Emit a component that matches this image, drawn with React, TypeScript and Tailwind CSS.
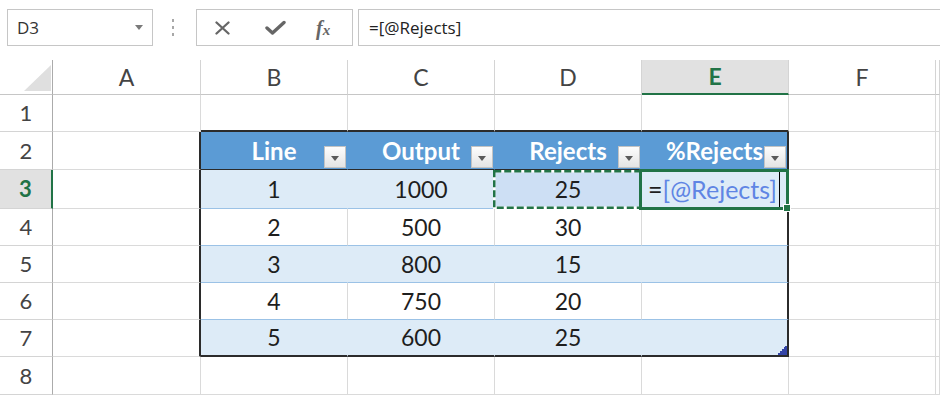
import React from 'react';

// Excel-style table view: name box, formula bar, sheet grid with a formatted table

const columns = ['A', 'B', 'C', 'D', 'E', 'F', ''];
const headers = ['Line', 'Output', 'Rejects', '%Rejects'];
const data = [
  ['1', '1000', '25'],
  ['2', '500', '30'],
  ['3', '800', '15'],
  ['4', '750', '20'],
  ['5', '600', '25'],
];

const DropButton = () => (
  <div className="absolute right-[1px] bottom-[1px] z-10 flex h-[22px] w-[22px] items-center justify-center border border-[#c3c3c3] bg-gradient-to-b from-[#fdfdfd] to-[#e4e4e4]">
    <span className="mt-[3px] h-0 w-0 border-x-[4px] border-t-[5px] border-x-transparent border-t-[#595959]" />
  </div>
);

function cellClasses(r: number, c: number) {
  const inTable = r >= 2 && r <= 7 && c >= 1 && c <= 4;
  const banded = r === 3 || r === 5 || r === 7;

  let bg = 'bg-white';
  if (inTable) {
    if (r === 2) bg = 'bg-[#5b9bd5]';
    else if (r === 3 && c === 3) bg = 'bg-[#cddff4]';
    else if (banded) bg = 'bg-[#ddebf7]';
  }

  let right = 'border-r border-r-[#dadada]';
  if ((c === 0 || c === 4) && r >= 2 && r <= 7) right = 'border-r-2 border-r-[#2b2b2b]';
  else if (inTable && (r === 2 || banded)) right = 'border-r border-r-transparent';

  let bottom = 'border-b border-b-[#dadada]';
  if (r === 1 && c >= 1 && c <= 4) bottom = 'border-b-2 border-b-[#2b2b2b]';
  else if (inTable && r === 2) bottom = 'border-b border-b-[#2b2b2b]';
  else if (inTable && r === 7) bottom = 'border-b-2 border-b-[#2b2b2b]';
  else if (inTable) bottom = 'border-b border-b-[#9bc2e6]';

  return `${bg} ${right} ${bottom}`;
}

function Cell({ r, c }: { r: number; c: number }) {
  const cls = cellClasses(r, c);

  if (r === 2 && c >= 1 && c <= 4) {
    return (
      <div className={`relative flex items-center justify-center overflow-hidden whitespace-nowrap text-[24px] font-bold leading-none text-white ${cls}`}>
        {headers[c - 1]}
        <DropButton />
      </div>
    );
  }

  if (r >= 3 && r <= 7 && c >= 1 && c <= 3) {
    const value = data[r - 3][c - 1];
    return (
      <div className={`relative flex items-center justify-center text-[23px] leading-none text-[#1e1e1e] ${cls}`}>
        {value}
        {r === 3 && c === 3 && (
          // copy marquee round the referenced cell
          <svg className="absolute top-0 -left-[2px] z-10" width="149" height="39" viewBox="0 0 149 39">
            <rect x="1.25" y="1.25" width="146.5" height="36.5" fill="none" stroke="#ffffff" strokeWidth="2.5" />
            <rect x="1.25" y="1.25" width="146.5" height="36.5" fill="none" stroke="#217346" strokeWidth="2.5" strokeDasharray="7 3" />
          </svg>
        )}
      </div>
    );
  }

  if (r === 3 && c === 4) {
    return (
      <div className={`relative flex items-center pl-[6px] text-[25px] leading-none ${cls}`}>
        <span className="text-[#1e1e1e]">=</span>
        <span className="text-[#5f85e4]">[@Rejects]</span>
        <span className="ml-[2px] h-[37px] w-[1px] bg-black" />
        <div className="absolute -top-[1px] -left-[3px] -right-[2px] -bottom-[2px] z-20 border-[3px] border-[#217346]">
          <div className="absolute -right-[5px] -bottom-[5px] h-[8px] w-[8px] border border-white bg-[#217346]" />
        </div>
      </div>
    );
  }

  if (r === 7 && c === 4) {
    return (
      <div className={`relative ${cls}`}>
        <svg className="absolute right-0 bottom-0" width="9" height="9" viewBox="0 0 9 9">
          <polygon points="9,0 9,9 0,9 0,7 2,7 2,5 4,5 4,3 6,3 6,1 7,1 7,0" fill="#3344a6" />
        </svg>
      </div>
    );
  }

  return <div className={cls} />;
}

export default function App() {
  const rows = [1, 2, 3, 4, 5, 6, 7, 8];

  return (
    <div className="h-[399px] w-[940px] overflow-hidden bg-white font-['Lato',sans-serif]">
      {/* Name box + formula bar */}
      <div className="flex h-[60px] items-start pt-[9px] pl-[7px] font-['Open_Sans',sans-serif]">
        <div className="flex h-[37px] w-[146px] items-center justify-between border border-[#c6c6c6] pl-[9px] pr-[9px] text-[17px] text-[#333]">
          <span>D3</span>
          <span className="h-0 w-0 border-x-[4px] border-t-[5px] border-x-transparent border-t-[#7a7a7a]" />
        </div>
        <div className="ml-[19px] mr-[22px] flex h-[37px] flex-col items-center justify-center gap-[4px]">
          <span className="h-[3px] w-[2px] bg-[#a8a8a8]" />
          <span className="h-[3px] w-[2px] bg-[#a8a8a8]" />
          <span className="h-[3px] w-[2px] bg-[#a8a8a8]" />
        </div>
        <div className="flex h-[37px] w-[157px] items-center border border-[#c6c6c6] pl-[18px]">
          <svg width="15" height="14" viewBox="0 0 15 14">
            <path d="M1.5 1.5 13.5 12.5M13.5 1.5 1.5 12.5" stroke="#666" strokeWidth="2.3" strokeLinecap="round" />
          </svg>
          <svg className="ml-[35px]" width="21" height="15" viewBox="0 0 21 15">
            <path d="M2 8 7.5 13 19 2.5" fill="none" stroke="#666" strokeWidth="3.4" strokeLinecap="round" strokeLinejoin="round" />
          </svg>
          <span className="ml-[30px] font-['Liberation_Serif',serif] text-[20px] font-bold italic leading-none text-[#666]">
            f<span className="text-[15px]">x</span>
          </span>
        </div>
        <div className="ml-[5px] flex h-[37px] flex-1 items-center border border-r-0 border-[#c6c6c6] pl-[10px] text-[17px] text-[#222]">
          =[@Rejects]
        </div>
      </div>

      {/* Sheet grid */}
      <div className="grid grid-cols-[53px_148px_147px_147px_147px_147px_147px_1fr] grid-rows-[35px_37px_38px_39px_37px_37px_37px_37px_38px]">
        {/* column headings */}
        <div className="flex items-end justify-end border-r border-b border-r-[#ababab] border-b-[#c6c6c6] pr-[1px] pb-[3px]">
          <svg width="27" height="26" viewBox="0 0 27 26">
            <polygon points="27,0 27,26 0,26" fill="#dfdfdf" />
          </svg>
        </div>
        {columns.map((col) =>
          col === 'E' ? (
            <div key="E" className="flex items-center justify-center border-r border-b-2 border-r-[#d4d4d4] border-b-[#217346] bg-[#e1e1e1] text-[23px] font-bold leading-none text-[#217346]">
              E
            </div>
          ) : (
            <div key={col || 'G'} className="flex items-center justify-center border-r border-b border-r-[#d4d4d4] border-b-[#c6c6c6] text-[23px] leading-none text-[#444]">
              {col}
            </div>
          ),
        )}

        {rows.map((r) => (
          <React.Fragment key={r}>
            {r === 3 ? (
              <div className="flex items-center justify-center border-r-2 border-b border-r-[#217346] border-b-[#d4d4d4] bg-[#e1e1e1] text-[22px] font-bold leading-none text-[#217346]">
                3
              </div>
            ) : (
              <div className="flex items-center justify-center border-r border-b border-r-[#ababab] border-b-[#d4d4d4] text-[22px] leading-none text-[#444]">
                {r}
              </div>
            )}
            {columns.map((_, c) => (
              <Cell key={c} r={r} c={c} />
            ))}
          </React.Fragment>
        ))}
      </div>
    </div>
  );
}
